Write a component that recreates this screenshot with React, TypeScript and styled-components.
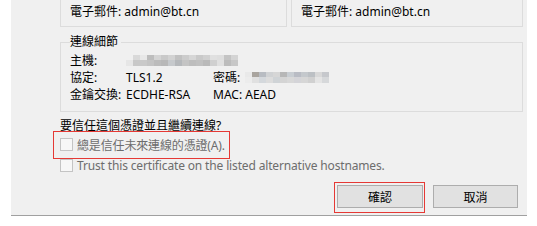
import React from "react";
import styled, { createGlobalStyle } from "styled-components";

const Global = createGlobalStyle`
  html, body { margin: 0; padding: 0; background: #ffffff; }
  body {
    font-family: "Segoe UI", "Noto Sans", "Noto Sans CJK TC", sans-serif;
    font-size: 12px;
    color: #000;
  }
`;

const Panel = styled.div`
  margin-left: 11px;
  width: 516px;
  height: 216px;
  background: #f0f0f0;
  border-bottom: 1px solid #a0a0a0;
  padding-left: 49px;
  padding-right: 4px;
  box-sizing: content-box;
  box-sizing: border-box;
  display: flex;
  flex-direction: column;
`;

const TopRow = styled.div`
  display: flex;
  gap: 4px;
  height: 27px;
`;

const InfoBox = styled.div<{ $w: number }>`
  width: ${(p) => p.$w}px;
  box-sizing: border-box;
  border: 1px solid #dcdcdc;
  border-top: none;
  padding-left: 9px;
  display: flex;
  align-items: center;
  padding-bottom: 2px;
  line-height: 16px;
`;

const Group = styled.fieldset`
  margin: 7px 0 0 0;
  width: 463px;
  box-sizing: border-box;
  border: 1px solid #dcdcdc;
  padding: 0 0 0 9px;
  height: 78px;
  min-width: 0;
`;

const Legend = styled.legend`
  padding: 0 3px 0 0;
  margin-left: 0;
  line-height: 16px;
`;

const DetailGrid = styled.div`
  display: grid;
  grid-template-columns: 56px 87px 32px auto;
  grid-auto-rows: 17px;
  align-items: center;
  margin-top: 2px;
`;

const Cell = styled.span<{ $span?: number }>`
  grid-column: span ${(p) => p.$span ?? 1};
  white-space: nowrap;
  line-height: 17px;
  display: flex;
  align-items: center;
`;

const Mosaic = styled.span`
  display: inline-grid;
  grid-auto-flow: column;
  grid-template-rows: 5px 6px;
  grid-auto-columns: 7px;
`;

const Px = styled.span<{ $c: string }>`
  background: ${(p) => p.$c};
`;

const Question = styled.div`
  margin-top: 6px;
  line-height: 16px;
`;

const CheckRow = styled.div<{ $marked?: boolean }>`
  position: relative;
  display: flex;
  align-items: center;
  gap: 4px;
  height: 21px;
  color: #6d6d6d;
  width: fit-content;
  letter-spacing: -0.15px;
  white-space: nowrap;
  &::after {
    content: "";
    display: ${(p) => (p.$marked ? "block" : "none")};
    position: absolute;
    left: -7px;
    right: -5px;
    top: -3px;
    bottom: -4px;
    border: 1px solid #e53935;
    pointer-events: none;
  }
`;

const Box = styled.span`
  width: 13px;
  height: 13px;
  box-sizing: border-box;
  border: 1px solid #c4c4c4;
  background: #f7f7f7;
  flex: none;
`;

const Buttons = styled.div`
  margin-top: auto;
  margin-bottom: 7px;
  display: flex;
  justify-content: flex-end;
  gap: 10px;
  padding-right: 5px;
`;

const Button = styled.button<{ $marked?: boolean; $w: number }>`
  position: relative;
  width: ${(p) => p.$w}px;
  height: 23px;
  background: #e1e1e1;
  border: 1px solid #adadad;
  font: inherit;
  color: #000;
  padding: 0;
  &::after {
    content: "";
    display: ${(p) => (p.$marked ? "block" : "none")};
    position: absolute;
    left: -4px;
    right: -3px;
    top: -4px;
    bottom: -6px;
    border: 1px solid #e53935;
  }
`;

const hostColors = [
  "#f0f0f0", "#e6e6e6",
  "#d9d9d9", "#c8c8c8",
  "#e8e8e8", "#c9c9c9",
  "#bdbdbd", "#c4c4c4",
  "#d4d4d4", "#bcbcbc",
  "#c9c9c9", "#b8b8b8",
  "#d2d2d2", "#c6c9cc",
  "#c1c1c1", "#b5b8bb",
  "#cccccc", "#c4c4c4",
  "#d6d6d6", "#bdbdbd",
  "#c9c9c9", "#c0c0c0",
  "#d0d0d0", "#b9b9b9",
  "#e0e0e0", "#d0d0d0",
  "#dedede", "#e0e0e0",
  "#c4c4c4", "#bcbcbc",
  "#d4d4d4", "#c7c7c7",
];

const cipherColors = [
  "#e9e9e9", "#ececec",
  "#a9a49e", "#e0e0e0",
  "#b8bcc2", "#d4d8dc",
  "#d0d2d4", "#dcdcdc",
  "#d6d6d6", "#cfd3d6",
  "#b7b7b7", "#d4d4d4",
  "#c8cdd2", "#d8d8d8",
  "#b9bcc4", "#d4d4d8",
  "#c4c8cc", "#d6d6d6",
  "#bcc0c4", "#d0d0d0",
  "#d8d8d8", "#e4e4e4",
  "#c6c8cc", "#d6d8da",
];

function MosaicBlock({ colors }: { colors: string[] }) {
  return (
    <Mosaic>
      {colors.map((c, i) => (
        <Px key={i} $c={c} />
      ))}
    </Mosaic>
  );
}

export default function App() {
  return (
    <>
      <Global />
      <Panel>
        <TopRow>
          <InfoBox $w={227}>電子郵件: admin@bt.cn</InfoBox>
          <InfoBox $w={232}>電子郵件: admin@bt.cn</InfoBox>
        </TopRow>
        <Group>
          <Legend>連線細節</Legend>
          <DetailGrid>
            <Cell>主機:</Cell>
            <Cell $span={3}>
              <MosaicBlock colors={hostColors} />
            </Cell>
            <Cell>協定:</Cell>
            <Cell>TLS1.2</Cell>
            <Cell>密碼:</Cell>
            <Cell>
              <MosaicBlock colors={cipherColors} />
            </Cell>
            <Cell>金鑰交換:</Cell>
            <Cell>ECDHE-RSA</Cell>
            <Cell $span={2}>MAC: AEAD</Cell>
          </DetailGrid>
        </Group>
        <Question>要信任這個憑證並且繼續連線?</Question>
        <CheckRow $marked>
          <Box />
          總是信任未來連線的憑證(A).
        </CheckRow>
        <CheckRow>
          <Box />
          Trust this certificate on the listed alternative hostnames.
        </CheckRow>
        <Buttons>
          <Button $marked $w={86}>確認</Button>
          <Button $w={85}>取消</Button>
        </Buttons>
      </Panel>
    </>
  );
}
